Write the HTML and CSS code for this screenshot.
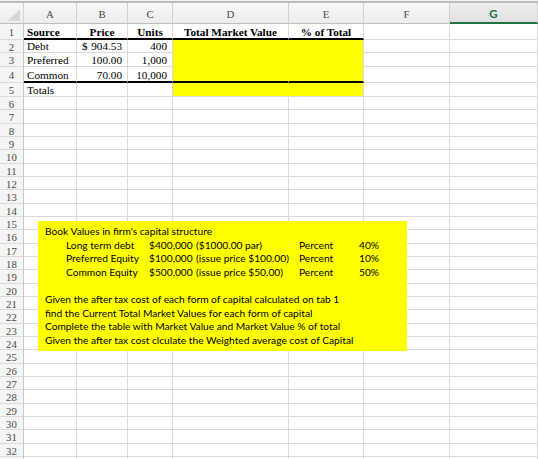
FILE: index.html
```html
<!DOCTYPE html>
<html>
<head>
<meta charset="utf-8">
<link rel="stylesheet" href="styles.css">
</head>
<body>
<div class="sheet">
  <div class="topbar"></div>
  <div class="grid">
    <div class="hd corner"><svg width="24" height="20" viewBox="0 0 24 20"><polygon points="21,6 21,18 8,18" fill="#d6d6d6"/></svg></div>
    <div class="hd">A</div>
    <div class="hd">B</div>
    <div class="hd">C</div>
    <div class="hd">D</div>
    <div class="hd">E</div>
    <div class="hd">F</div>
    <div class="hd sel">G</div>

    <div class="rn r1">1</div>
    <div class="c b thick">Source</div>
    <div class="c b ctr thick">Price</div>
    <div class="c b ctr thick">Units</div>
    <div class="c b ctr thick">Total Market Value</div>
    <div class="c b ctr thick">% of Total</div>
    <div class="c"></div>
    <div class="c"></div>

    <div class="rn">2</div>
    <div class="c">Debt</div>
    <div class="c acc"><span>$</span><span>904.53</span></div>
    <div class="c num">400</div>
    <div class="c y yd yb"></div>
    <div class="c y yb"></div>
    <div class="c"></div>
    <div class="c"></div>

    <div class="rn">3</div>
    <div class="c">Preferred</div>
    <div class="c num">100.00</div>
    <div class="c num">1,000</div>
    <div class="c y yd yb"></div>
    <div class="c y yb"></div>
    <div class="c"></div>
    <div class="c"></div>

    <div class="rn">4</div>
    <div class="c thick">Common</div>
    <div class="c num thick">70.00</div>
    <div class="c num thick">10,000</div>
    <div class="c y yd thick"></div>
    <div class="c y thick"></div>
    <div class="c"></div>
    <div class="c"></div>

    <div class="rn">5</div>
    <div class="c">Totals</div>
    <div class="c"></div>
    <div class="c"></div>
    <div class="c y yd"></div>
    <div class="c y"></div>
    <div class="c"></div>
    <div class="c"></div>
  </div>

  <div class="lower">
    <div class="rncol">
      <div>6</div><div>7</div><div>8</div><div>9</div><div>10</div><div>11</div><div>12</div><div>13</div><div>14</div>
      <div>15</div><div>16</div><div>17</div><div>18</div><div>19</div><div>20</div><div>21</div><div>22</div><div>23</div>
      <div>24</div><div>25</div><div>26</div><div>27</div><div>28</div><div>29</div><div>30</div><div>31</div><div>32</div>
      <div></div>
    </div>
    <div class="col"></div>
    <div class="col"></div>
    <div class="col"></div>
    <div class="col"></div>
    <div class="col"></div>
    <div class="col"></div>
    <div class="col"></div>
  </div>

  <div class="note">
    <div class="line">Book Values in firm's capital structure</div>
    <div class="tbl">
      <span>Long term debt</span><span>$400,000</span><span>($1000.00 par)</span><span class="pc">Percent</span><span class="pv">40%</span>
      <span>Preferred Equity</span><span>$100,000</span><span>(issue price $100.00)</span><span>Percent</span><span class="pv">10%</span>
      <span>Common Equity</span><span>$500,000</span><span>(issue price $50.00)</span><span>Percent</span><span class="pv">50%</span>
    </div>
    <div class="line">&nbsp;</div>
    <div class="line">Given the after tax cost of each form of capital calculated on tab 1</div>
    <div class="line">find the Current Total Market Values for each form of capital</div>
    <div class="line">Complete the table with Market Value and Market Value % of total</div>
    <div class="line">Given the after tax cost clculate the Weighted average cost of Capital</div>
  </div>
</div>
</body>
</html>
```

FILE: styles.css
```css
html, body {
  margin: 0;
  padding: 0;
  background: #ffffff;
}
.sheet {
  position: relative;
  width: 538px;
  height: 459px;
  overflow: hidden;
  font-family: "Liberation Serif", "Times New Roman", serif;
}
.topbar {
  height: 3px;
  box-sizing: border-box;
  border-top: 1px solid #f4f4f4;
  border-bottom: 2px solid #bcbcbc;
  background: #f4f4f4;
}
.grid {
  display: grid;
  grid-template-columns: 24px 53px 51px 45px 116px 75px 86px 88px;
  grid-template-rows: 21px 16px 13px 14px 16px 14px;
}
.grid > div {
  box-sizing: border-box;
  min-width: 0;
  overflow: visible;
  white-space: nowrap;
}
.hd {
  background: linear-gradient(#f8f8f8, #ececec);
  border-right: 1px solid #d2d2d2;
  border-bottom: 1px solid #bdbdbd;
  color: #4a4a4a;
  font-size: 10.8px;
  display: flex;
  align-items: center;
  justify-content: center;
  padding-top: 1px;
}
.corner {
  padding: 0;
  align-items: flex-start;
  justify-content: flex-start;
}
.corner svg { display: block; }
.sel {
  background: linear-gradient(#efefef, #e0e0e0);
  border-bottom: 2px solid #1f7244;
  color: #1f7244;
  font-family: Lato, "Liberation Sans", sans-serif;
  font-weight: 700;
  font-size: 11.5px;
}
.rn {
  background: #f5f5f5;
  border-right: 1px solid #c8c8c8;
  border-bottom: 1px solid #dadada;
  color: #4a4a4a;
  font-size: 10.8px;
  display: flex;
  align-items: center;
  justify-content: center;
  padding-top: 1px;
}
.c {
  border-right: 1px solid #dadada;
  border-bottom: 1px solid #dadada;
  font-size: 11.2px;
  color: #000;
  display: flex;
  align-items: flex-end;
  line-height: 12px;
  padding: 0 5px 0 3px;
}
.b { font-weight: 700; }
.ctr { justify-content: center; padding: 0; }
.num { justify-content: flex-end; }
.acc { justify-content: space-between; padding-left: 5px; }
.thick { border-bottom: 2px solid #000; }
.y { background: #ffff00; }
.yd { border-right-color: #ffff00; }
.yb { border-bottom-color: #ffff00; }

.lower {
  display: grid;
  grid-template-columns: 24px 53px 51px 45px 116px 75px 86px 88px;
  height: 362px;
}
.rncol {
  background: #f5f5f5;
  border-right: 1px solid #c8c8c8;
  box-sizing: border-box;
}
.rncol > div {
  height: 13px;
  box-sizing: border-box;
  border-bottom: 1px solid #dadada;
  color: #4a4a4a;
  font-size: 10.8px;
  display: flex;
  align-items: center;
  justify-content: center;
  padding-top: 1px;
}
.rncol > div:nth-child(3n+2) { height: 14px; }
.col {
  border-right: 1px solid #dadada;
  box-sizing: border-box;
  background-image: linear-gradient(to bottom,
    transparent 0, transparent 12px, #dadada 12px, #dadada 13px,
    transparent 13px, transparent 26px, #dadada 26px, #dadada 27px,
    transparent 27px, transparent 39px, #dadada 39px, #dadada 40px);
  background-size: 100% 40px;
  background-repeat: repeat-y;
}

.note {
  position: absolute;
  left: 38px;
  top: 221px;
  width: 369px;
  height: 130px;
  box-sizing: border-box;
  background: #ffff00;
  padding: 4px 0 0 7px;
  font-family: Lato, "Noto Sans", sans-serif;
  font-size: 10.2px;
  line-height: 13.6px;
  color: #000;
  white-space: nowrap;
}
.tbl {
  display: grid;
  grid-template-columns: 83px 47px 103px 60px 19px;
  margin-left: 21px;
}
.pv { text-align: right; }
```
